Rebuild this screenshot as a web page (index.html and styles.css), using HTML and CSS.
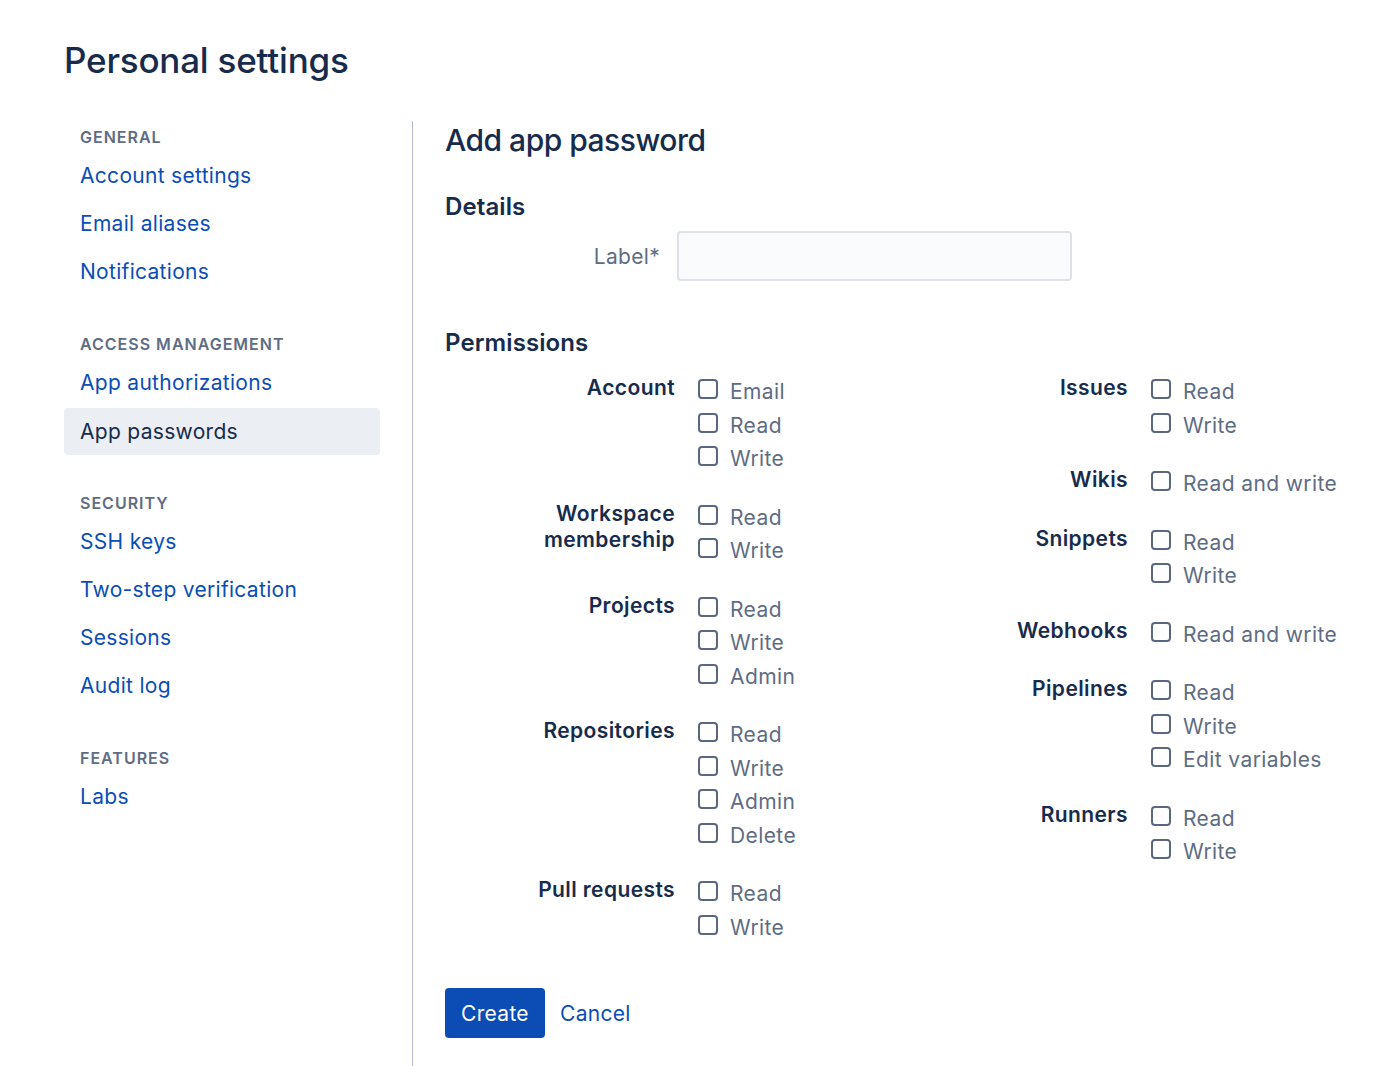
FILE: index.html
```html
<!DOCTYPE html>
<html lang="en">
<head>
<meta charset="utf-8">
<title>Personal settings</title>
<link rel="stylesheet" href="styles.css">
</head>
<body>
<div class="page">
  <h1 class="page-title">Personal settings</h1>
  <div class="layout">
    <nav class="sidebar">
      <div class="nav-heading first">GENERAL</div>
      <a class="nav-link" href="#">Account settings</a>
      <a class="nav-link" href="#">Email aliases</a>
      <a class="nav-link" href="#">Notifications</a>
      <div class="nav-heading">ACCESS MANAGEMENT</div>
      <a class="nav-link" href="#">App authorizations</a>
      <a class="nav-link active" href="#">App passwords</a>
      <div class="nav-heading">SECURITY</div>
      <a class="nav-link" href="#">SSH keys</a>
      <a class="nav-link" href="#">Two-step verification</a>
      <a class="nav-link" href="#">Sessions</a>
      <a class="nav-link" href="#">Audit log</a>
      <div class="nav-heading">FEATURES</div>
      <a class="nav-link" href="#">Labs</a>
    </nav>
    <div class="divider"></div>
    <main class="main">
      <h2 class="main-title">Add app password</h2>
      <h3 class="section-title details">Details</h3>
      <div class="field-row">
        <label class="field-label" for="label">Label*</label>
        <input class="text-input" id="label" type="text">
      </div>
      <h3 class="section-title permissions">Permissions</h3>
      <div class="perm-grid">
        <div class="perm-col">
          <div class="perm-group">
            <div class="perm-label">Account</div>
            <div class="perm-options">
              <label class="opt"><span class="box"></span>Email</label>
              <label class="opt"><span class="box"></span>Read</label>
              <label class="opt"><span class="box"></span>Write</label>
            </div>
          </div>
          <div class="perm-group">
            <div class="perm-label">Workspace membership</div>
            <div class="perm-options">
              <label class="opt"><span class="box"></span>Read</label>
              <label class="opt"><span class="box"></span>Write</label>
            </div>
          </div>
          <div class="perm-group">
            <div class="perm-label">Projects</div>
            <div class="perm-options">
              <label class="opt"><span class="box"></span>Read</label>
              <label class="opt"><span class="box"></span>Write</label>
              <label class="opt"><span class="box"></span>Admin</label>
            </div>
          </div>
          <div class="perm-group">
            <div class="perm-label">Repositories</div>
            <div class="perm-options">
              <label class="opt"><span class="box"></span>Read</label>
              <label class="opt"><span class="box"></span>Write</label>
              <label class="opt"><span class="box"></span>Admin</label>
              <label class="opt"><span class="box"></span>Delete</label>
            </div>
          </div>
          <div class="perm-group">
            <div class="perm-label">Pull requests</div>
            <div class="perm-options">
              <label class="opt"><span class="box"></span>Read</label>
              <label class="opt"><span class="box"></span>Write</label>
            </div>
          </div>
        </div>
        <div class="perm-col">
          <div class="perm-group">
            <div class="perm-label">Issues</div>
            <div class="perm-options">
              <label class="opt"><span class="box"></span>Read</label>
              <label class="opt"><span class="box"></span>Write</label>
            </div>
          </div>
          <div class="perm-group">
            <div class="perm-label">Wikis</div>
            <div class="perm-options">
              <label class="opt"><span class="box"></span>Read and write</label>
            </div>
          </div>
          <div class="perm-group">
            <div class="perm-label">Snippets</div>
            <div class="perm-options">
              <label class="opt"><span class="box"></span>Read</label>
              <label class="opt"><span class="box"></span>Write</label>
            </div>
          </div>
          <div class="perm-group">
            <div class="perm-label">Webhooks</div>
            <div class="perm-options">
              <label class="opt"><span class="box"></span>Read and write</label>
            </div>
          </div>
          <div class="perm-group">
            <div class="perm-label">Pipelines</div>
            <div class="perm-options">
              <label class="opt"><span class="box"></span>Read</label>
              <label class="opt"><span class="box"></span>Write</label>
              <label class="opt"><span class="box"></span>Edit variables</label>
            </div>
          </div>
          <div class="perm-group">
            <div class="perm-label">Runners</div>
            <div class="perm-options">
              <label class="opt"><span class="box"></span>Read</label>
              <label class="opt"><span class="box"></span>Write</label>
            </div>
          </div>
        </div>
      </div>
      <div class="actions">
        <button class="btn-primary" type="button">Create</button>
        <a class="btn-link" href="#">Cancel</a>
      </div>
    </main>
  </div>
</div>
</body>
</html>
```

FILE: styles.css
```css
* { box-sizing: border-box; }

html, body {
  margin: 0;
  padding: 0;
  background: #ffffff;
}

body {
  font-family: Inter, "Noto Sans", "Liberation Sans", sans-serif;
  color: #172b4d;
  height: 1066px;
  overflow: hidden;
}

.page {
  padding: 39px 0 0 64px;
}

.page-title {
  margin: 0;
  font-size: 35px;
  line-height: 43px;
  font-weight: 500;
  letter-spacing: -0.2px;
  color: #172b4d;
}

.layout {
  display: flex;
  margin-top: 39px;
  min-height: 960px;
}

.sidebar {
  width: 316px;
  display: flex;
  flex-direction: column;
  padding-top: 4px;
}

.nav-heading {
  font-size: 16px;
  line-height: 24px;
  font-weight: 600;
  color: #5e6c84;
  letter-spacing: 1px;
  padding-left: 16px;
  margin-top: 36px;
  margin-bottom: 3px;
}

.nav-heading.first {
  margin-top: 0;
}

.nav-link {
  display: block;
  height: 48px;
  line-height: 48px;
  padding-left: 16px;
  font-size: 21px;
  letter-spacing: 0.3px;
  color: #0b4db5;
  text-decoration: none;
  border-radius: 4px;
}

.nav-link.active {
  background: #ebeef2;
  color: #172b4d;
  height: 47px;
  line-height: 47px;
  margin-top: 1px;
}

.divider {
  width: 1px;
  background: #b3bcd0;
  margin-left: 32px;
}

.main {
  flex: 1;
  padding-left: 32px;
  padding-top: 1px;
}

.main-title {
  margin: 0;
  font-size: 30px;
  line-height: 36px;
  font-weight: 500;
  letter-spacing: -0.5px;
  color: #172b4d;
}

.section-title {
  margin: 0;
  font-size: 24px;
  line-height: 30px;
  font-weight: 600;
  color: #172b4d;
  letter-spacing: 0.1px;
}

.section-title.details {
  margin-top: 34px;
}

.section-title.permissions {
  margin-top: 47px;
}

.field-row {
  display: flex;
  align-items: center;
  margin-top: 9px;
}

.field-label {
  width: 215px;
  text-align: right;
  font-size: 21px;
  letter-spacing: 0.3px;
  color: #5e6c84;
  margin-right: 17px;
}

.text-input {
  width: 395px;
  height: 50px;
  border: 2px solid #dfe1e6;
  background: #fafbfc;
  border-radius: 4px;
  font-size: 20px;
  padding: 0 10px;
  font-family: inherit;
}

.perm-grid {
  display: grid;
  grid-template-columns: 453px 453px;
  margin-top: 17px;
}

.perm-col {
  display: flex;
  flex-direction: column;
  gap: 25px;
}

.perm-group {
  display: grid;
  grid-template-columns: 230px 1fr;
  column-gap: 23px;
  align-items: start;
}

.perm-label {
  text-align: right;
  font-size: 21px;
  line-height: 26px;
  font-weight: 600;
  color: #172b4d;
  letter-spacing: 0.4px;
}

.perm-options {
  display: flex;
  flex-direction: column;
}

.opt {
  display: flex;
  align-items: center;
  height: 33.5px;
  font-size: 21px;
  letter-spacing: 0.4px;
  color: #5e6c84;
}

.box {
  width: 20px;
  height: 20px;
  border: 2px solid #5b6781;
  border-radius: 4px;
  margin-right: 12px;
  margin-bottom: 5px;
  flex: none;
}

.actions {
  display: flex;
  align-items: center;
  margin-top: 44px;
}

.btn-primary {
  width: 100px;
  height: 50px;
  border: none;
  border-radius: 4px;
  background: #0b4db5;
  color: #ffffff;
  font-family: inherit;
  font-size: 21px;
  letter-spacing: 0.3px;
  padding: 0;
}

.btn-link {
  margin-left: 15px;
  font-size: 21px;
  letter-spacing: 0.3px;
  color: #0b4db5;
  text-decoration: none;
}
```
